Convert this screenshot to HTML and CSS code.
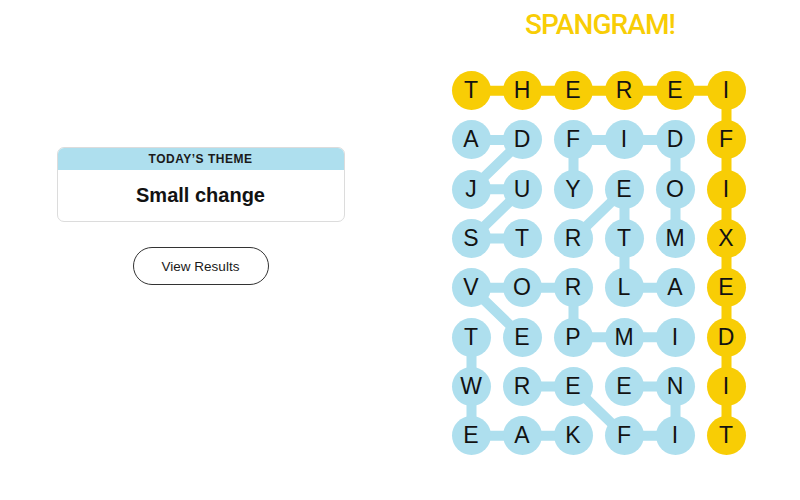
FILE: index.html
```html
<!DOCTYPE html>
<html>
<head>
<meta charset="utf-8">
<link rel="stylesheet" href="styles.css">
</head>
<body>
<div class="page">
  <section class="left">
    <div class="theme-card">
      <div class="theme-head">TODAY’S THEME</div>
      <div class="theme-body">Small change</div>
    </div>
    <button class="results-btn">View Results</button>
  </section>
  <section class="right">
    <h1 class="banner">SPANGRAM!</h1>
    <div class="board">
      <svg class="links" width="306" height="395" viewBox="0 0 306 395">
        <g fill="none" stroke-width="10" stroke-linecap="round" stroke-linejoin="round">
          <polyline class="yl" points="25.5,24.65 280.5,24.65 280.5,369.75"/>
          <polyline class="bl" points="25.5,73.95 76.5,73.95 25.5,123.25 76.5,123.25 25.5,172.55 76.5,172.55"/>
          <polyline class="bl" points="229.5,172.55 229.5,73.95 178.5,73.95 127.5,73.95 127.5,123.25"/>
          <polyline class="bl" points="229.5,221.85 178.5,221.85 178.5,123.25 127.5,172.55"/>
          <polyline class="bl" points="229.5,271.15 127.5,271.15 127.5,221.85 25.5,221.85 76.5,271.15"/>
          <polyline class="bl" points="25.5,271.15 25.5,369.75 127.5,369.75"/>
          <polyline class="bl" points="76.5,320.45 127.5,320.45 178.5,369.75 229.5,369.75 229.5,320.45 178.5,320.45"/>
        </g>
      </svg>
      <span class="cell y">T</span><span class="cell y">H</span><span class="cell y">E</span><span class="cell y">R</span><span class="cell y">E</span><span class="cell y">I</span>
      <span class="cell b">A</span><span class="cell b">D</span><span class="cell b">F</span><span class="cell b">I</span><span class="cell b">D</span><span class="cell y">F</span>
      <span class="cell b">J</span><span class="cell b">U</span><span class="cell b">Y</span><span class="cell b">E</span><span class="cell b">O</span><span class="cell y">I</span>
      <span class="cell b">S</span><span class="cell b">T</span><span class="cell b">R</span><span class="cell b">T</span><span class="cell b">M</span><span class="cell y">X</span>
      <span class="cell b">V</span><span class="cell b">O</span><span class="cell b">R</span><span class="cell b">L</span><span class="cell b">A</span><span class="cell y">E</span>
      <span class="cell b">T</span><span class="cell b">E</span><span class="cell b">P</span><span class="cell b">M</span><span class="cell b">I</span><span class="cell y">D</span>
      <span class="cell b">W</span><span class="cell b">R</span><span class="cell b">E</span><span class="cell b">E</span><span class="cell b">N</span><span class="cell y">I</span>
      <span class="cell b">E</span><span class="cell b">A</span><span class="cell b">K</span><span class="cell b">F</span><span class="cell b">I</span><span class="cell y">T</span>
    </div>
  </section>
</div>
</body>
</html>
```

FILE: styles.css
```css
html, body {
  margin: 0;
  padding: 0;
  background: #ffffff;
  font-family: "Liberation Sans", Arial, sans-serif;
  color: #121212;
}

.page {
  display: flex;
  width: 800px;
  height: 500px;
}

.left {
  width: 400px;
  box-sizing: border-box;
  padding-top: 147px;
  padding-left: 1px;
  display: flex;
  flex-direction: column;
  align-items: center;
}

.theme-card {
  width: 288px;
  border: 1px solid #dcdcdc;
  border-radius: 7px;
  overflow: hidden;
  box-sizing: border-box;
}

.theme-head {
  background: #aedfee;
  height: 22px;
  line-height: 22px;
  text-align: center;
  font-size: 12px;
  font-weight: 700;
  letter-spacing: 0.5px;
  color: #1a1a1a;
}

.theme-body {
  height: 51px;
  line-height: 51px;
  text-align: center;
  font-size: 20px;
  font-weight: 700;
  color: #121212;
}

.results-btn {
  margin-top: 25px;
  width: 136px;
  height: 38px;
  border: 1px solid #333;
  border-radius: 19px;
  background: #fff;
  font-family: "Liberation Sans", Arial, sans-serif;
  font-size: 13.5px;
  color: #1a1a1a;
  padding: 0;
}

.right {
  width: 400px;
  display: flex;
  flex-direction: column;
  align-items: center;
}

.banner {
  margin: 11px 0 0 0;
  font-family: Roboto, "Liberation Sans", sans-serif;
  font-weight: 500;
  font-size: 28px;
  line-height: 28px;
  letter-spacing: -0.9px;
  color: #f8cd05;
}

.board {
  position: relative;
  margin-top: 27px;
  margin-left: -3px;
  display: grid;
  grid-template-columns: repeat(6, 51px);
  grid-template-rows: repeat(8, 49.3px);
  width: 306px;
}

.links {
  position: absolute;
  left: 0;
  top: 0;
}

.links .yl { stroke: #f8cd05; }
.links .bl { stroke: #aedfee; }

.cell {
  position: relative;
  align-self: center;
  justify-self: center;
  width: 39px;
  height: 39px;
  border-radius: 50%;
  display: flex;
  align-items: center;
  justify-content: center;
  font-size: 23px;
  color: #121212;
}

.cell.y { background: #f8cd05; }
.cell.b { background: #aedfee; }
```
